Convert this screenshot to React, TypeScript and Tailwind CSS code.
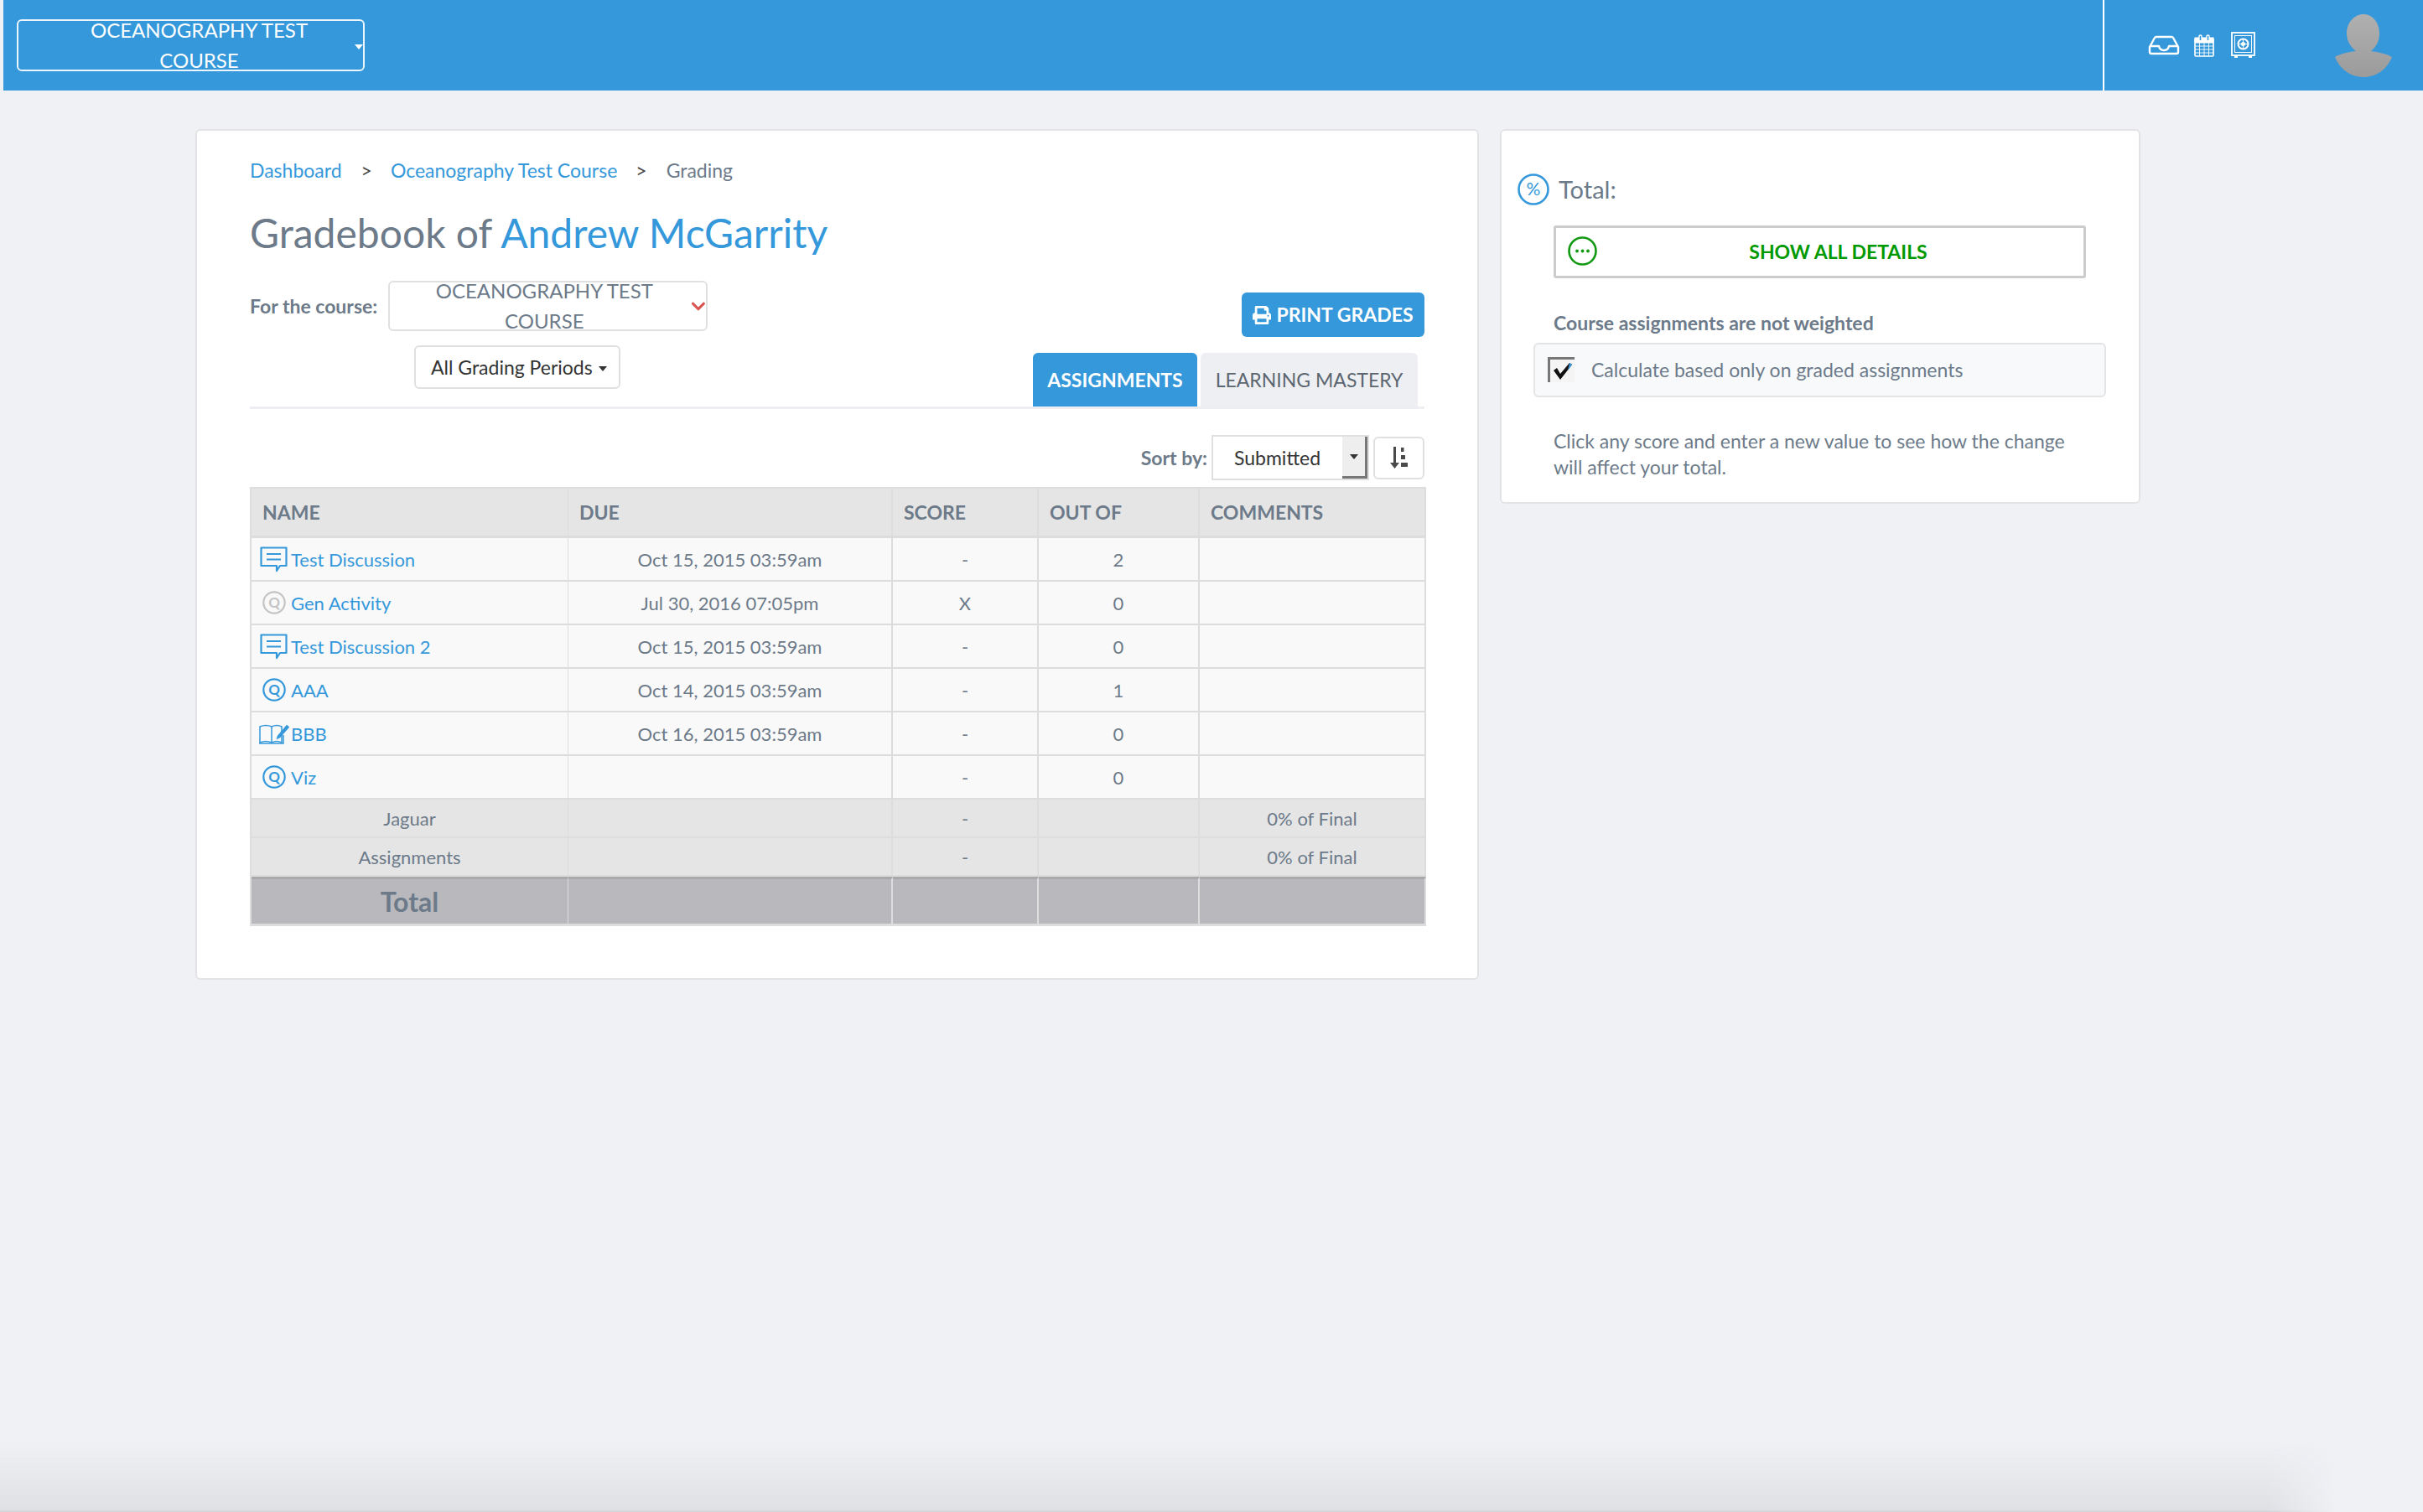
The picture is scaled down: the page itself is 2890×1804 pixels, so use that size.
import { FaPrint, FaChevronDown } from "react-icons/fa";

const rows = [
  { name: "Test Discussion", icon: "chat", due: "Oct 15, 2015 03:59am", score: "-", out: "2" },
  { name: "Gen Activity", icon: "quizOff", due: "Jul 30, 2016 07:05pm", score: "X", out: "0" },
  { name: "Test Discussion 2", icon: "chat", due: "Oct 15, 2015 03:59am", score: "-", out: "0" },
  { name: "AAA", icon: "quiz", due: "Oct 14, 2015 03:59am", score: "-", out: "1" },
  { name: "BBB", icon: "book", due: "Oct 16, 2015 03:59am", score: "-", out: "0" },
  { name: "Viz", icon: "quiz", due: "", score: "-", out: "0" },
];

function Caret({ className }: { className: string }) {
  return <span className={"inline-block w-0 h-0 border-x-[5px] border-x-transparent border-t-[6px] " + className} />;
}

function InboxIcon() {
  return (
    <svg width="38" height="24" viewBox="0 0 38 24" fill="none" stroke="white" strokeWidth="2.4" strokeLinejoin="round">
      <path d="M2 14 L8 3 Q8.5 2 10 2 H28 Q29.5 2 30 3 L36 14 V20 Q36 22 34 22 H4 Q2 22 2 20 Z" />
      <path d="M2 13 H13 Q14 18 19 18 Q24 18 25 13 H36" />
    </svg>
  );
}

function CalendarIcon() {
  return (
    <svg width="24" height="27" viewBox="0 0 24 27" fill="none" stroke="white">
      <rect x="1" y="5" width="22" height="21" rx="1" strokeWidth="1.6" />
      <rect x="1" y="4" width="22" height="6" fill="white" strokeWidth="1" />
      <path d="M6 7 V2 Q6 1 7.500 1 Q9 1 9 2 V7 M15 7 V2 Q15 1 16.500 1 Q18 1 18 2 V7" fill="#3498db" strokeWidth="1.4" />
      <path d="M1 14 H23 M1 18 H23 M1 22 H23 M6.500 10 V26 M12 10 V26 M17.500 10 V26" strokeWidth="0.9" />
    </svg>
  );
}

function SafeIcon() {
  return (
    <svg width="29" height="32" viewBox="0 0 29 32" fill="none" stroke="white">
      <rect x="1" y="1" width="27" height="27" strokeWidth="1.800" />
      <rect x="4.500" y="4.500" width="20" height="20" strokeWidth="1" />
      <circle cx="14.500" cy="14.500" r="6" strokeWidth="2" />
      <circle cx="14.500" cy="14.500" r="2.500" fill="white" strokeWidth="0" />
      <path d="M14.500 8 V21 M8 14.500 H21" strokeWidth="1" />
      <path d="M4 28 V31 H8 V28 M21 28 V31 H25 V28" fill="white" strokeWidth="0" />
    </svg>
  );
}

function Avatar() {
  return (
    <svg width="68" height="75" viewBox="0 0 68 75">
      <defs>
        <linearGradient id="avatarFill" x1="0" y1="0" x2="0" y2="1">
          <stop offset="0" stopColor="#b0b0b0" />
          <stop offset="1" stopColor="#9b9b9b" />
        </linearGradient>
      </defs>
      <path
        d="M34 0 C45 0 53 10 53 23 C53 33 48 40 43 44 C52 45 61 47 68 51 C62 66 49 75 34 75 C19 75 6 66 0 51 C7 47 16 45 25 44 C20 40 14 33 14 23 C14 10 23 0 34 0 Z"
        fill="url(#avatarFill)"
      />
    </svg>
  );
}

function ChatIcon() {
  return (
    <svg width="33" height="31" viewBox="0 0 33 31" fill="none" stroke="#3498db" strokeWidth="2.200">
      <path d="M1.500 1.500 H31.500 V23 H24 L20 29 V23 H1.500 Z" strokeLinejoin="round" />
      <path d="M8 9 H25 M8 15.500 H25" />
    </svg>
  );
}

function QuizIcon({ color }: { color: string }) {
  return (
    <svg width="28" height="28" viewBox="0 0 28 28" fill="none">
      <circle cx="14" cy="14" r="12.700" stroke={color} strokeWidth="2.200" />
      <text x="14" y="19.500" textAnchor="middle" fontSize="17" fontWeight="700" fontFamily="Lato, sans-serif" fill={color}>
        Q
      </text>
    </svg>
  );
}

function BookIcon() {
  return (
    <svg width="36" height="26" viewBox="0 0 36 26" fill="none" stroke="#3498db" strokeWidth="1.500">
      <path d="M1 5 Q8 2 15 5 V24 Q8 21 1 24 Z" />
      <path d="M15 5 Q21 2 27 5 V24 Q21 21 15 24" />
      <path d="M1 24 V25 H29 V15" />
      <path d="M22 16 L33 3 L36 5.500 L25 18 L21 20 Z" fill="#3498db" strokeWidth="0.500" />
    </svg>
  );
}

function SortIcon() {
  return (
    <svg width="21" height="26" viewBox="0 0 21 26" fill="#4a4a4a">
      <path d="M4 0 H7 V19 H11 L5.500 26 L0 19 H4 Z" />
      <rect x="13" y="1" width="3.500" height="5" />
      <rect x="13" y="10" width="5" height="5" />
      <rect x="13" y="19" width="8" height="5" />
    </svg>
  );
}

const rowIcons: Record<string, React.ReactNode> = {
  chat: <ChatIcon />,
  quiz: <QuizIcon color="#3498db" />,
  quizOff: <QuizIcon color="#c4c4c4" />,
  book: <BookIcon />,
};

export default function App() {
  return (
    <div className="relative min-h-screen overflow-hidden bg-[#f0f1f5] font-['Lato',sans-serif] text-[23px] text-[#6c7a89]">
      <header className="ml-1 flex h-[108px] items-center bg-[#3498db] text-white">
        <button className="ml-4 flex h-[62px] w-[415px] items-center rounded-md border-2 border-white/90 pl-10 text-[24px]">
          OCEANOGRAPHY TEST COURSE
          <Caret className="ml-2.5 mt-1 border-t-white" />
        </button>
        <div className="ml-auto flex h-full w-[382px] items-center border-l-2 border-white pl-[52px]">
          <InboxIcon />
          <span className="ml-[17px]"><CalendarIcon /></span>
          <span className="ml-5"><SafeIcon /></span>
          <span className="ml-[95px]"><Avatar /></span>
        </div>
      </header>

      <main className="flex items-start gap-[25px] pl-[233px] pt-[46px]">
        <section className="w-[1531px] rounded-md border-2 border-[#e3e3e6] bg-white px-[63px] pb-[62px] pt-[32px]">
          <nav className="flex h-[30px] items-center">
            <a className="text-[#3498db]">Dashboard</a>
            <span className="ml-[23px] text-[#444]">&gt;</span>
            <a className="ml-[22px] text-[#3498db]">Oceanography Test Course</a>
            <span className="ml-[22px] text-[#444]">&gt;</span>
            <span className="ml-[23px]">Grading</span>
          </nav>

          <h1 className="mt-[30px] h-[60px] text-[48px] leading-[60px]">
            Gradebook of <a className="text-[#3498db]">Andrew McGarrity</a>
          </h1>

          <div className="mt-[27px] flex items-start justify-between border-b-[3px] border-[#eeeef2]">
            <div>
              <div className="flex items-center">
                <span className="font-bold">For the course:</span>
                <button className="ml-[13px] flex h-[60px] w-[381px] items-center rounded-md border-2 border-[#e0e0e0] pl-4 text-[24px]">
                  OCEANOGRAPHY TEST COURSE
                  <FaChevronDown className="ml-[7px] text-[19px] text-[#d9534f]" />
                </button>
              </div>
              <button className="ml-[196px] mt-[17px] flex h-[52px] w-[246px] items-center rounded-md border-2 border-[#e0e0e0] pl-[18px] text-[#333]">
                All Grading Periods
                <Caret className="ml-[7px] mt-1 border-t-[#333]" />
              </button>
            </div>
            <div className="mt-[14px] flex flex-col items-end">
              <button className="flex h-[53px] w-[218px] items-center justify-center gap-1.5 rounded-md bg-[#3498db] font-bold text-white">
                <FaPrint className="text-[22px]" />
                PRINT GRADES
              </button>
              <div className="mr-[8px] mt-[19px] flex items-end gap-[4px]">
                <button className="flex h-[64px] w-[196px] items-center justify-center rounded-t-md bg-[#3498db] font-bold text-white">
                  ASSIGNMENTS
                </button>
                <button className="flex h-[64px] w-[259px] items-center justify-center rounded-t-md bg-[#eeeff3] text-[#5c6670]">
                  LEARNING MASTERY
                </button>
              </div>
            </div>
          </div>

          <div className="mt-[31px] flex items-center justify-end">
            <span className="mr-[5px] font-bold">Sort by:</span>
            <div className="flex h-[54px] w-[188px] border-2 border-[#e0e0e0]">
              <span className="flex flex-1 items-center pl-[25px] text-[#333]">Submitted</span>
              <span className="flex w-[30px] items-center justify-center border-b-[3px] border-r-[3px] border-[#777] bg-[#eeeeee]">
                <Caret className="border-t-[#333]" />
              </span>
            </div>
            <button className="ml-[5px] flex h-[51px] w-[61px] items-center justify-center rounded-md border-2 border-[#e0e0e0]">
              <SortIcon />
            </button>
          </div>

          <table className="mt-[8px] w-[1403px] table-fixed border-separate border-spacing-0 border-l-2 border-t-2 border-[#dddddd] text-center text-[22px]">
            <colgroup>
              <col className="w-[378px]" />
              <col className="w-[387px]" />
              <col className="w-[174px]" />
              <col className="w-[192px]" />
              <col />
            </colgroup>
            <thead>
              <tr className="h-[59px] bg-[#e5e5e5] text-left text-[23px] font-bold">
                <th className="border-b-[3px] border-r border-[#dddddd] pl-[13px]">NAME</th>
                <th className="border-b-[3px] border-r-2 border-[#dddddd] pl-[13px]">DUE</th>
                <th className="border-b-[3px] border-r-2 border-[#dddddd] pl-[13px]">SCORE</th>
                <th className="border-b-[3px] border-r-2 border-[#dddddd] pl-[13px]">OUT OF</th>
                <th className="border-b-[3px] border-r-2 border-[#dddddd] pl-[13px]">COMMENTS</th>
              </tr>
            </thead>
            <tbody>
              {rows.map((r) => (
                <tr key={r.name} className="h-[52px] bg-[#f9f9f9]">
                  <td className="border-b-2 border-r border-[#dddddd] text-left">
                    <div className="flex items-center">
                      <span className="flex w-[47px] justify-center pl-[6px]">{rowIcons[r.icon]}</span>
                      <a className="text-[#3498db]">{r.name}</a>
                    </div>
                  </td>
                  <td className="border-b-2 border-r-2 border-[#dddddd]">{r.due}</td>
                  <td className="border-b-2 border-r-2 border-[#dddddd]">{r.score}</td>
                  <td className="border-b-2 border-r-2 border-[#dddddd]">{r.out}</td>
                  <td className="border-b-2 border-r-2 border-[#dddddd]" />
                </tr>
              ))}
              {["Jaguar", "Assignments"].map((label) => (
                <tr key={label} className="h-[46px] bg-[#e5e5e5]">
                  <td className="border-b-2 border-r border-[#dddddd]">{label}</td>
                  <td className="border-b-2 border-r-2 border-[#dddddd]" />
                  <td className="border-b-2 border-r-2 border-[#dddddd]">-</td>
                  <td className="border-b-2 border-r-2 border-[#dddddd]" />
                  <td className="border-b-2 border-r-2 border-[#dddddd]">0% of Final</td>
                </tr>
              ))}
              <tr className="h-[59px] bg-[#b9b9bd]">
                <td className="border-y-[3px] border-r border-b-[#dddddd] border-r-[#dddddd] border-t-[#a9a9a9] text-[32px] font-bold">Total</td>
                <td className="border-y-[3px] border-r-2 border-b-[#dddddd] border-r-[#dddddd] border-t-[#a9a9a9]" />
                <td className="border-y-[3px] border-r-2 border-b-[#dddddd] border-r-[#dddddd] border-t-[#a9a9a9]" />
                <td className="border-y-[3px] border-r-2 border-b-[#dddddd] border-r-[#dddddd] border-t-[#a9a9a9]" />
                <td className="border-y-[3px] border-r-2 border-b-[#dddddd] border-r-[#dddddd] border-t-[#a9a9a9]" />
              </tr>
            </tbody>
          </table>
        </section>

        <aside className="w-[764px] rounded-md border-2 border-[#e3e3e6] bg-white pb-[26px] pl-[19px] pr-[39px] pt-[48px]">
          <div className="flex items-center">
            <svg width="38" height="38" viewBox="0 0 38 38" fill="none">
              <circle cx="19" cy="19" r="17.500" stroke="#3498db" strokeWidth="2.600" />
              <text x="19" y="26" textAnchor="middle" fontSize="21" fontFamily="Lato, sans-serif" fill="#3498db">%</text>
            </svg>
            <span className="ml-[11px] text-[29px]">Total:</span>
          </div>
          <button className="relative ml-[43px] mt-[21px] flex h-[63px] w-[635px] items-center justify-center rounded-[3px] border-[3px] border-[#cccccc] pl-[44px] font-bold text-[#009900]">
            <svg className="absolute left-[14px] top-[10px]" width="35" height="35" viewBox="0 0 35 35" fill="none">
              <circle cx="17.500" cy="17.500" r="16" stroke="#119911" strokeWidth="2.600" />
              <circle cx="11" cy="17.500" r="1.900" fill="#119911" />
              <circle cx="17.500" cy="17.500" r="1.900" fill="#119911" />
              <circle cx="24" cy="17.500" r="1.900" fill="#119911" />
            </svg>
            SHOW ALL DETAILS
          </button>
          <p className="ml-[43px] mt-[38px] font-bold leading-[30px]">Course assignments are not weighted</p>
          <label className="ml-[19px] mt-[9px] flex h-[65px] items-center rounded-md border-2 border-[#e4e4e7] bg-[#f8f9fb] pl-[15px]">
            <span className="flex h-[30px] w-[32px] items-center justify-center border-l-[3px] border-t-[3px] border-[#777] bg-[#f4f4f4]">
              <svg width="24" height="22" viewBox="0 0 24 22">
                <path d="M1 10 L5 7 L9 14 L20 1 L23 3 L9 21 Z" fill="#111" />
                <path d="M20 1 L23 3 L18 10 Z" fill="#3498db" />
              </svg>
            </span>
            <span className="ml-[20px]">Calculate based only on graded assignments</span>
          </label>
          <p className="ml-[43px] mt-[37px] leading-[31px]">
            Click any score and enter a new value to see how the change
            <br />
            will affect your total.
          </p>
        </aside>
      </main>

      {/* the faint band along the bottom of the page */}
      <div className="pointer-events-none absolute bottom-0 left-0 h-[84px] w-[2790px] border-b-2 border-b-[#d6d7db] bg-gradient-to-b from-transparent to-[#dfe0e4] [mask-image:linear-gradient(to_right,black_2705px,transparent_2785px)]" />
    </div>
  );
}
